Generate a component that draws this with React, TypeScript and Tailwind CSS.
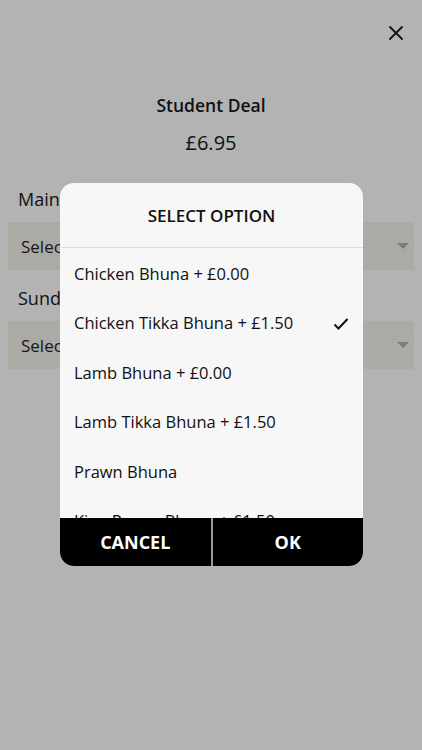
import { useState } from "react";

const options = [
  "Chicken Bhuna + £0.00",
  "Chicken Tikka Bhuna + £1.50",
  "Lamb Bhuna + £0.00",
  "Lamb Tikka Bhuna + £1.50",
  "Prawn Bhuna",
  "King Prawn Bhuna + £1.50",
];

function Caret() {
  return (
    <svg width="12" height="6" viewBox="0 0 12 6" className="shrink-0">
      <path d="M0 0 L12 0 L6 6 Z" fill="#7a7a78" />
    </svg>
  );
}

function SelectBox() {
  return (
    <div className="mx-2 flex h-[48px] items-center justify-between bg-[#abaaa4] pl-[13px] pr-[5px]">
      <span className="text-[17px] text-[#161616]">Select an option</span>
      <Caret />
    </div>
  );
}

export default function App() {
  const [selected, setSelected] = useState(1);

  return (
    <div
      className="relative h-[750px] w-[422px] overflow-hidden bg-[#b3b3b3] text-[#111]"
      style={{ fontFamily: '"Open Sans", sans-serif' }}
    >
      {/* page behind the dialog */}
      <div className="flex justify-end px-[18px] pt-[25px]">
        <svg width="16" height="16" viewBox="0 0 16 16">
          <path
            d="M2 2 L14 14 M14 2 L2 14"
            stroke="#111"
            strokeWidth="1.8"
            strokeLinecap="round"
          />
        </svg>
      </div>
      <div className="mt-[51px] text-center text-[17.5px] font-semibold">
        Student Deal
      </div>
      <div className="mt-[10px] text-center text-[20px]">£6.95</div>

      <div className="mt-[28px] px-[18px] text-[18px]">Main Course</div>
      <div className="mt-[9px]">
        <SelectBox />
      </div>
      <div className="mt-[15px] px-[18px] text-[18px]">Sundries</div>
      <div className="mt-[9px]">
        <SelectBox />
      </div>

      {/* dialog */}
      <div className="absolute left-[60px] top-[183px] flex h-[383px] w-[303px] flex-col overflow-hidden rounded-[14px] bg-[#f7f7f7]">
        <div className="flex h-[65px] shrink-0 items-center justify-center border-b border-[#dcdcdc] pt-[2px] text-[17px] font-semibold text-[#111]">
          SELECT OPTION
        </div>
        <div className="flex-1 overflow-hidden">
          {options.map((o, i) => (
            <button
              key={o}
              onClick={() => setSelected(i)}
              className="flex h-[49.5px] w-full items-center justify-between pl-[14px] pr-[14px] pt-[3px] text-left text-[16.5px] text-[#111]"
            >
              <span>{o}</span>
              {selected === i && (
                <svg width="16" height="14" viewBox="0 0 16 14">
                  <path
                    d="M1.5 7.5 L5.5 11.5 L14.5 2"
                    fill="none"
                    stroke="#111"
                    strokeWidth="2"
                  />
                </svg>
              )}
            </button>
          ))}
        </div>
        <div className="flex h-[48px] shrink-0 bg-[#000]">
          <button className="flex flex-1 items-center justify-center text-[18px] font-bold text-white">
            CANCEL
          </button>
          <div className="w-[2px] bg-[#9a9a9a]" />
          <button className="flex flex-1 items-center justify-center text-[18px] font-bold text-white">
            OK
          </button>
        </div>
      </div>
    </div>
  );
}
